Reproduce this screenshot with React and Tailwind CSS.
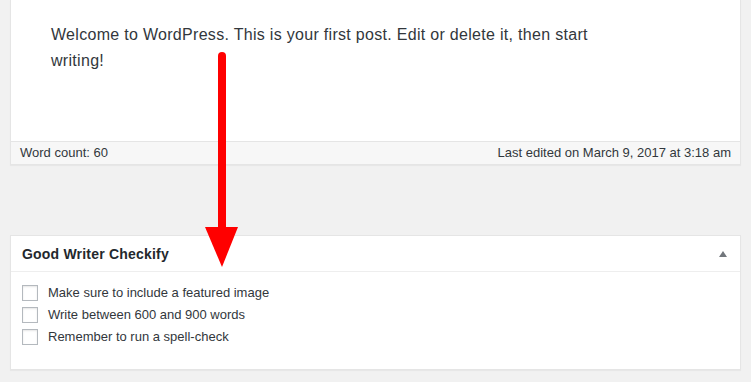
export default function App() {
    const items = [
        'Make sure to include a featured image',
        'Write between 600 and 900 words',
        'Remember to run a spell-check',
    ];

    return (
        <div className="relative w-[751px] h-[382px] overflow-hidden bg-[#f1f1f1] px-[10px] font-['Liberation_Sans',Arial,sans-serif] text-[#32373c]">
            {/* Editor */}
            <div className="bg-white border-x border-b border-[#e5e5e5] shadow-[0_1px_1px_rgba(0,0,0,0.04)]">
                <div className="h-[141px] pt-[22px] pl-[40px]">
                    <p className="w-[580px] text-[16px] leading-[26px] tracking-[0.3px] text-[#32373c]">
                        Welcome to WordPress. This is your first post. Edit or delete it, then start writing!
                    </p>
                </div>
                <div className="h-[23px] border-t border-[#e5e5e5] bg-[#f7f7f7] flex items-center justify-between px-[9px] text-[13px] text-[#32373c]">
                    <span>Word count: 60</span>
                    <span>Last edited on March 9, 2017 at 3:18 am</span>
                </div>
            </div>

            {/* Meta box */}
            <div className="mt-[70px] bg-white border border-[#e5e5e5] shadow-[0_1px_1px_rgba(0,0,0,0.04)]">
                <div className="h-[36px] border-b border-[#eeeeee] flex items-center justify-between pl-[11px] pr-[13px]">
                    <h2 className="text-[14px] font-bold tracking-[0.2px] text-[#23282d] translate-y-[1px]">Good Writer Checkify</h2>
                    <svg width="8" height="6" viewBox="0 0 8 6">
                        <path d="M4 0 L8 6 L0 6 Z" fill="#72777c" />
                    </svg>
                </div>
                <div className="pt-[13px] pb-[24px] pl-[11px] flex flex-col gap-[6px]">
                    {items.map((item) => (
                        <label key={item} className="flex items-center gap-[10px] h-[16px] text-[13px] text-[#32373c]">
                            <span className="w-[16px] h-[16px] border border-[#b4b9be] bg-white shadow-[inset_0_1px_2px_rgba(0,0,0,0.1)]"></span>
                            {item}
                        </label>
                    ))}
                </div>
            </div>

            {/* Red arrow overlay */}
            <svg className="absolute left-0 top-0 pointer-events-none" width="751" height="382" viewBox="0 0 751 382">
                <rect x="218" y="52" width="8" height="180" rx="4" fill="#ff0000" />
                <path d="M205 227 L238 227 L222 267 Z" fill="#ff0000" />
            </svg>
        </div>
    );
}
